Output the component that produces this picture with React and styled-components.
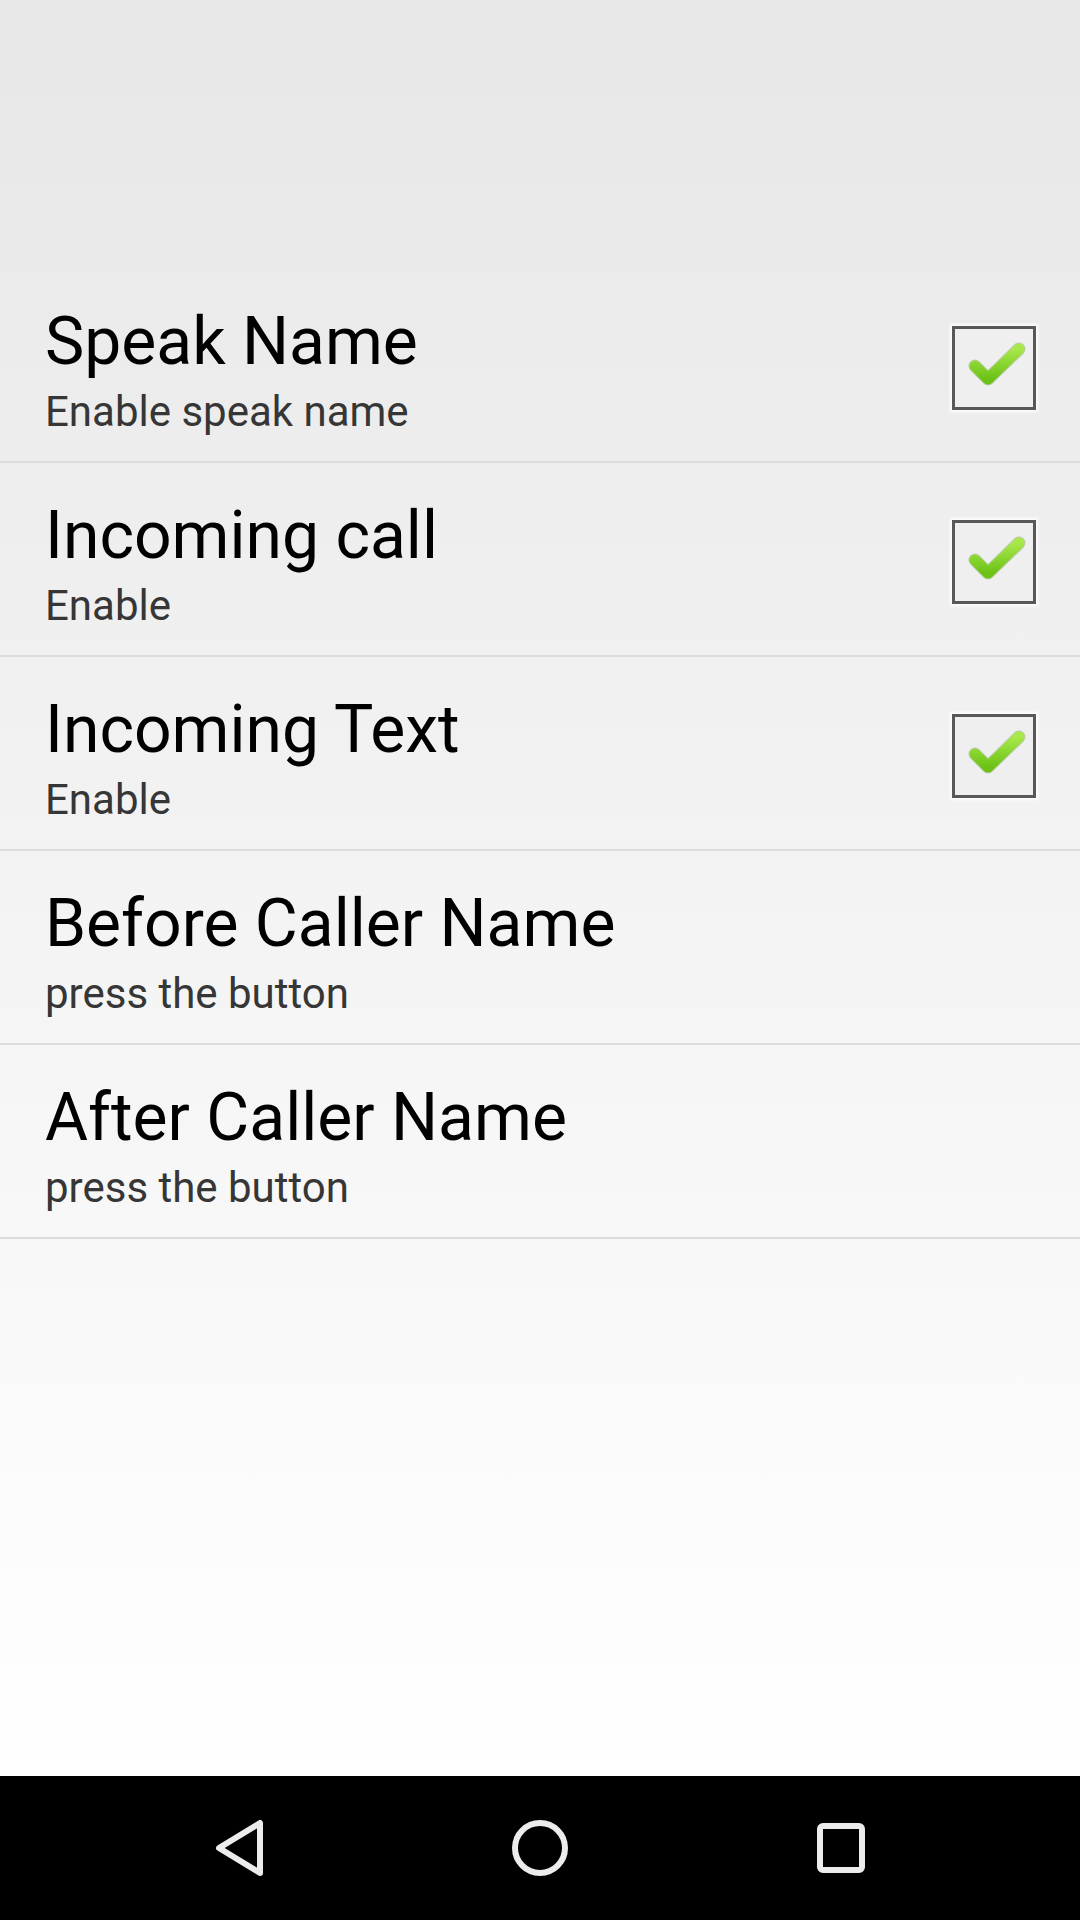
import React from "react";
import styled, { createGlobalStyle } from "styled-components";

const Global = createGlobalStyle`
  html, body { margin: 0; padding: 0; }
  body { font-family: Roboto, "Noto Sans", "Liberation Sans", sans-serif; }
`;

const Screen = styled.div`
  width: 1080px;
  height: 1920px;
  display: flex;
  flex-direction: column;
  overflow: hidden;
`;

const Content = styled.main`
  flex: 1;
  background: linear-gradient(to bottom, #e7e7e7 0%, #f2f2f2 45%, #ffffff 100%);
  padding-top: 269px;
  box-sizing: border-box;
`;

const Row = styled.div`
  height: 194px;
  box-sizing: border-box;
  border-bottom: 2px solid #dcdcdc;
  display: flex;
  align-items: center;
  padding: 0 44px 0 45px;
`;

const TextBlock = styled.div`
  flex: 1;
  margin-top: 9px;
  display: flex;
  flex-direction: column;
  gap: 7px;
`;

const Title = styled.div`
  font-size: 66px;
  line-height: 77px;
  color: #000;
  white-space: nowrap;
`;

const Summary = styled.div`
  font-size: 42px;
  line-height: 49px;
  color: #363636;
  white-space: nowrap;
`;

const Box = styled.div`
  width: 84px;
  height: 84px;
  margin-top: 6px;
  box-sizing: border-box;
  border: 3px solid #585858;
  background: #efefef;
  box-shadow: 0 0 3px 2px rgba(255, 255, 255, 0.9);
  display: flex;
  align-items: center;
  justify-content: center;
  flex-shrink: 0;
`;

const NavBar = styled.nav`
  height: 144px;
  background: #000;
  display: flex;
  align-items: center;
  justify-content: center;
  gap: 134px;
`;

const NavButton = styled.div`
  width: 168px;
  height: 144px;
  display: flex;
  align-items: center;
  justify-content: center;
`;

const Check = () => (
  <Box>
    <svg width="78" height="78" viewBox="3 3 78 78">
      <defs>
        <linearGradient id="cg" x1="0" y1="0" x2="0" y2="1">
          <stop offset="0" stopColor="#a8e84a" />
          <stop offset="1" stopColor="#6cc216" />
        </linearGradient>
      </defs>
      <polyline
        points="23,40 36,53 67,23"
        fill="none"
        stroke="#5a8f20"
        strokeOpacity="0.35"
        strokeWidth="13"
        strokeLinejoin="round"
        strokeLinecap="round"
      />
      <polyline
        points="23,40 36,53 67,23"
        fill="none"
        stroke="url(#cg)"
        strokeWidth="11"
        strokeLinejoin="round"
        strokeLinecap="round"
      />
    </svg>
  </Box>
);

const items = [
  { title: "Speak Name", summary: "Enable speak name", check: true },
  { title: "Incoming call", summary: "Enable", check: true },
  { title: "Incoming Text", summary: "Enable", check: true },
  { title: "Before Caller Name", summary: "press the button", check: false },
  { title: "After Caller Name", summary: "press the button", check: false },
];

export default function App() {
  return (
    <>
      <Global />
      <Screen>
        <Content>
          {items.map((it) => (
            <Row key={it.title}>
              <TextBlock>
                <Title>{it.title}</Title>
                <Summary>{it.summary}</Summary>
              </TextBlock>
              {it.check && <Check />}
            </Row>
          ))}
        </Content>
        <NavBar>
          <NavButton>
            <svg width="56" height="64" viewBox="0 0 56 64">
              <path
                d="M50 7 L50 57 L9 32 Z"
                fill="none"
                stroke="#ececec"
                strokeWidth="6"
                strokeLinejoin="round"
              />
            </svg>
          </NavButton>
          <NavButton>
            <svg width="60" height="60" viewBox="0 0 60 60">
              <circle cx="30" cy="30" r="25" fill="none" stroke="#ececec" strokeWidth="6" />
            </svg>
          </NavButton>
          <NavButton>
            <svg width="56" height="56" viewBox="0 0 56 56">
              <rect x="6" y="6" width="42" height="44" rx="3" fill="none" stroke="#ececec" strokeWidth="6" />
            </svg>
          </NavButton>
        </NavBar>
      </Screen>
    </>
  );
}
